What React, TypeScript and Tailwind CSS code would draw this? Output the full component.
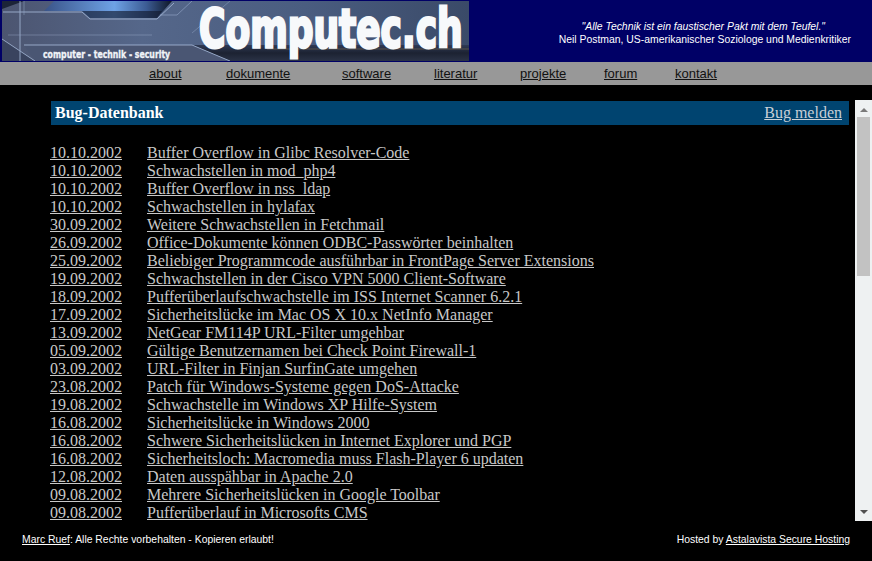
const navItems = [
  { label: "about", width: "w-[77px]" },
  { label: "dokumente", width: "w-[116px]" },
  { label: "software", width: "w-[92px]" },
  { label: "literatur", width: "w-[86px]" },
  { label: "projekte", width: "w-[84px]" },
  { label: "forum", width: "w-[71px]" },
  { label: "kontakt", width: "w-auto" },
];

const bugs = [
  ["10.10.2002", "Buffer Overflow in Glibc Resolver-Code"],
  ["10.10.2002", "Schwachstellen in mod_php4"],
  ["10.10.2002", "Buffer Overflow in nss_ldap"],
  ["10.10.2002", "Schwachstellen in hylafax"],
  ["30.09.2002", "Weitere Schwachstellen in Fetchmail"],
  ["26.09.2002", "Office-Dokumente können ODBC-Passwörter beinhalten"],
  ["25.09.2002", "Beliebiger Programmcode ausführbar in FrontPage Server Extensions"],
  ["19.09.2002", "Schwachstellen in der Cisco VPN 5000 Client-Software"],
  ["18.09.2002", "Pufferüberlaufschwachstelle im ISS Internet Scanner 6.2.1"],
  ["17.09.2002", "Sicherheitslücke im Mac OS X 10.x NetInfo Manager"],
  ["13.09.2002", "NetGear FM114P URL-Filter umgehbar"],
  ["05.09.2002", "Gültige Benutzernamen bei Check Point Firewall-1"],
  ["03.09.2002", "URL-Filter in Finjan SurfinGate umgehen"],
  ["23.08.2002", "Patch für Windows-Systeme gegen DoS-Attacke"],
  ["19.08.2002", "Schwachstelle im Windows XP Hilfe-System"],
  ["16.08.2002", "Sicherheitslücke in Windows 2000"],
  ["16.08.2002", "Schwere Sicherheitslücken in Internet Explorer und PGP"],
  ["16.08.2002", "Sicherheitsloch: Macromedia muss Flash-Player 6 updaten"],
  ["12.08.2002", "Daten ausspähbar in Apache 2.0"],
  ["09.08.2002", "Mehrere Sicherheitslücken in Google Toolbar"],
  ["09.08.2002", "Pufferüberlauf in Microsofts CMS"],
];

function Banner() {
  return (
    <svg width="467" height="60" viewBox="0 0 467 60" className="block">
      <defs>
        <linearGradient id="base" x1="0" y1="0" x2="1" y2="0">
          <stop offset="0" stopColor="#4c5570" />
          <stop offset="0.3" stopColor="#55678a" />
          <stop offset="0.65" stopColor="#4a5d80" />
          <stop offset="1" stopColor="#3a4a68" />
        </linearGradient>
        <linearGradient id="glow" x1="0" y1="0" x2="1" y2="0">
          <stop offset="0" stopColor="#3a5488" />
          <stop offset="0.55" stopColor="#6ea2e6" />
          <stop offset="0.8" stopColor="#3c5c94" />
          <stop offset="1" stopColor="#0e1626" />
        </linearGradient>
        <linearGradient id="floor" x1="0" y1="0" x2="0" y2="1">
          <stop offset="0" stopColor="#2f3a54" />
          <stop offset="0.5" stopColor="#1c2232" />
          <stop offset="1" stopColor="#2a3246" />
        </linearGradient>
      </defs>
      <rect width="467" height="60" fill="url(#base)" />
      <polygon points="0,0 22,0 0,8" fill="#1c2438" />
      <polygon points="52,0 170,0 155,17 88,17 80,10 42,10" fill="url(#glow)" />
      <polygon points="80,10 160,10 155,17 88,17" fill="#121a2e" opacity="0.65" />
      <polygon points="150,44 467,44 467,60 228,60 190,44" fill="url(#floor)" />
      <polygon points="0,38 33,60 0,60" fill="#39435e" />
      <polygon points="33,60 22,44 190,44 228,60" fill="#4a5673" />
      <g fill="none" stroke="#a9bcdc" strokeWidth="1" opacity="0.8">
        <path d="M1 11H80L88 18H155L172 2" />
        <path d="M158 14H175L190 0" opacity="0.6" />
        <path d="M18 0V60" />
        <path d="M22 0V14" opacity="0.5" />
        <path d="M6 34H150" opacity="0.45" />
        <path d="M0 38L33 60" />
        <path d="M22 44H190L228 60" />
        <path d="M228 0L190 32" opacity="0.45" />
      </g>
      <path d="M265 48H467" stroke="#7c6c54" strokeWidth="1" opacity="0.6" />
      <text
        transform="translate(197 45.5) scale(1 1.5)"
        fill="#f7f9fb"
        stroke="#f7f9fb"
        strokeWidth="2.6"
        vectorEffect="non-scaling-stroke"
        className="font-['DejaVu_Sans',sans-serif] text-[36px] font-bold"
      >
        Computec.ch
      </text>
      <text
        transform="translate(41 57) scale(1 1.28)"
        fill="#f1f4f8"
        stroke="#f1f4f8"
        strokeWidth="0.3"
        vectorEffect="non-scaling-stroke"
        className="font-['DejaVu_Sans',sans-serif] text-[7.8px] font-bold"
      >
        computer - technik - security
      </text>
    </svg>
  );
}

function Scrollbar() {
  return (
    <div className="flex w-[17px] flex-col bg-[#eef1f2]">
      <div className="flex h-[17px] items-center justify-center pt-[2px]">
        <div className="h-0 w-0 border-x-[4px] border-b-[4px] border-x-transparent border-b-[#7a7a7a]" />
      </div>
      <div className="mx-[2px] h-[159px] bg-[#c2c2c2]" />
      <div className="flex-1" />
      <div className="flex h-[17px] items-center justify-center pb-px">
        <div className="h-0 w-0 border-x-[4px] border-t-[4px] border-x-transparent border-t-[#505050]" />
      </div>
    </div>
  );
}

export default function App() {
  return (
    <div className="flex h-[561px] w-[872px] flex-col overflow-hidden bg-black font-['Liberation_Serif',serif]">
      <header className="flex h-[62px] bg-[#000066] pl-[2px] pt-px">
        <Banner />
        <div className="flex-1 pr-[21px] pt-[19px] text-right font-['Liberation_Sans',sans-serif] text-[10.4px] leading-[13px] text-white">
          <p className="pr-[26px] italic">"Alle Technik ist ein faustischer Pakt mit dem Teufel."</p>
          <p>Neil Postman, US-amerikanischer Soziologe und Medienkritiker</p>
        </div>
      </header>

      <nav className="flex h-[23px] items-center bg-[#989898] pl-[149px] font-['Liberation_Sans',sans-serif] text-[13px] text-[#111111]">
        {navItems.map((item) => (
          <div key={item.label} className={item.width}>
            <a href="#" className="underline">{item.label}</a>
          </div>
        ))}
      </nav>

      <main className="mt-[15px] flex h-[421px] pl-[51px]">
        <div className="w-[798px] pt-px">
          <div className="flex h-6 items-center justify-between bg-[#004470] pl-1 pr-[7px] text-white">
            <h1 className="text-[16px] font-bold">Bug-Datenbank</h1>
            <a href="#" className="text-[16px] text-[#c8d0d8] underline">Bug melden</a>
          </div>
          <div className="mt-[19px] text-[16px] leading-[18px] text-[#c8c8c8]">
            {bugs.map(([date, title], i) => (
              <div key={i} className="flex h-[18px]">
                <a href="#" className="-ml-px w-[97px] underline">{date}</a>
                <a href="#" className="underline">{title}</a>
              </div>
            ))}
          </div>
        </div>
        <div className="ml-[6px] flex">
          <Scrollbar />
        </div>
      </main>

      <footer className="mt-[12px] flex justify-between pl-[22px] pr-[22px] font-['Liberation_Sans',sans-serif] text-[10.4px] leading-[13px] text-white">
        <p><a href="#" className="underline">Marc Ruef</a>: Alle Rechte vorbehalten - Kopieren erlaubt!</p>
        <p>Hosted by <a href="#" className="underline">Astalavista Secure Hosting</a></p>
      </footer>
    </div>
  );
}
